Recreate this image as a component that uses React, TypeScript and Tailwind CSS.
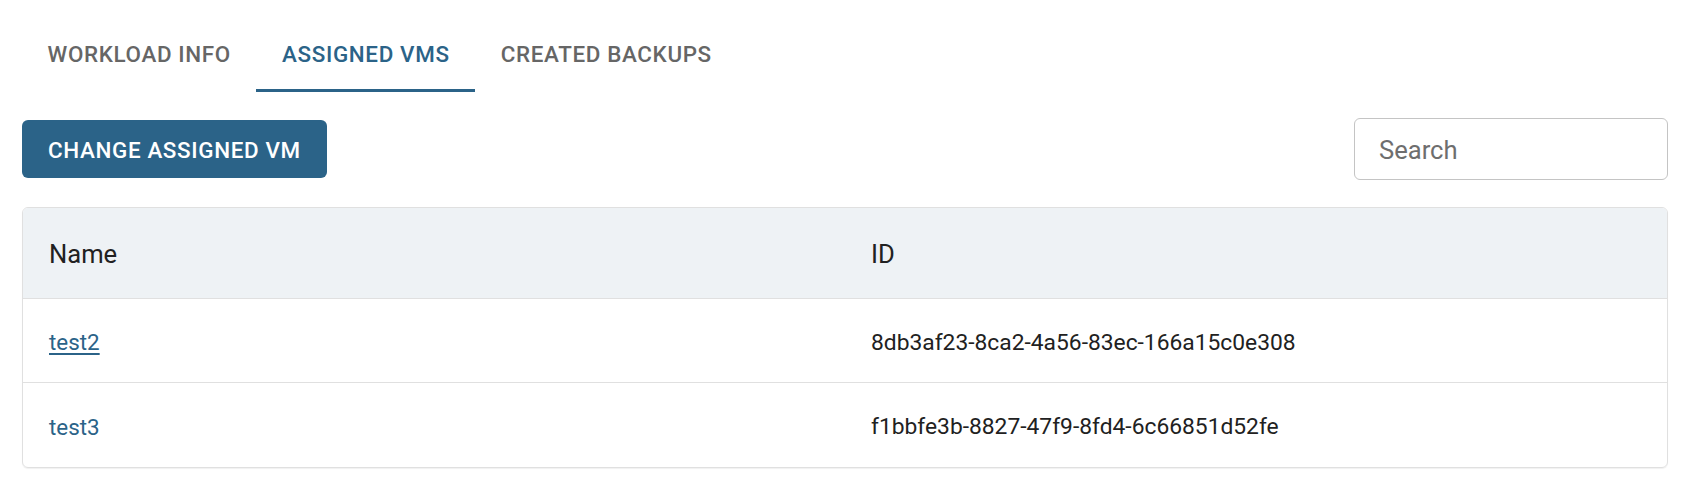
import { useState } from "react";

const tabs = ["Workload Info", "Assigned VMs", "Created Backups"];

const vms = [
  { name: "test2", id: "8db3af23-8ca2-4a56-83ec-166a15c0e308", hovered: true },
  { name: "test3", id: "f1bbfe3b-8827-47f9-8fd4-6c66851d52fe", hovered: false },
];

export default function App() {
  const [active, setActive] = useState(1);
  const [search, setSearch] = useState("");

  return (
    <div className="min-h-screen bg-white px-[22px] pt-[15px] font-['Roboto',sans-serif]">
      {/* Tabs */}
      <div className="flex h-[77px]">
        {tabs.map((tab, i) => (
          <button
            key={tab}
            onClick={() => setActive(i)}
            className={`relative flex items-center px-[25.6px] pt-[2px] text-[22.4px] font-medium uppercase tracking-[0.02857em] ${
              i === active ? "text-[#2b6388]" : "text-[#666666]"
            }`}
          >
            {tab}
            {i === active && (
              <span className="absolute bottom-0 left-0 right-0 h-[3px] bg-[#2b6388]" />
            )}
          </button>
        ))}
      </div>

      {/* Toolbar */}
      <div className="mt-[25px] flex h-[64px] items-center justify-between">
        <button className="h-[58px] rounded-[6px] bg-[#2b6388] px-[26px] pt-[3px] text-[22.4px] font-medium uppercase tracking-[0.02857em] text-white">
          Change Assigned VM
        </button>
        <div className="flex h-[62px] w-[314px] items-center rounded-[6px] border border-[#c4c4c4] px-[24px] pt-[2px]">
          <input
            value={search}
            onChange={(e) => setSearch(e.target.value)}
            placeholder="Search"
            className="w-full bg-transparent text-[25.6px] text-[#212121] outline-none placeholder:text-[#6e6e6e]"
          />
        </div>
      </div>

      {/* Table */}
      <div className="mt-[26px] overflow-hidden rounded-[6px] border border-[#e0e0e0] shadow-[0_1px_1px_rgba(0,0,0,0.06)]">
        <div className="flex h-[91px] border-b border-[#e0e0e0] bg-[#eef2f5] pt-[3px] text-[25.6px] text-[#212121]">
          <div className="flex flex-1 items-center px-[26px]">Name</div>
          <div className="flex flex-1 items-center px-[26px]">ID</div>
        </div>
        {vms.map((vm, i) => (
          <div
            key={vm.id}
            className={`flex h-[84px] pt-[5px] text-[22.4px] ${i < vms.length - 1 ? "border-b border-[#e0e0e0]" : ""}`}
          >
            <div className="flex flex-1 items-center px-[26px]">
              <a
                href="#"
                className={`text-[#2b6388] ${vm.hovered ? "underline underline-offset-[3px]" : "no-underline"}`}
              >
                {vm.name}
              </a>
            </div>
            <div className="flex flex-1 items-center px-[26px] text-[22.8px] text-[#212121]">{vm.id}</div>
          </div>
        ))}
      </div>
    </div>
  );
}
